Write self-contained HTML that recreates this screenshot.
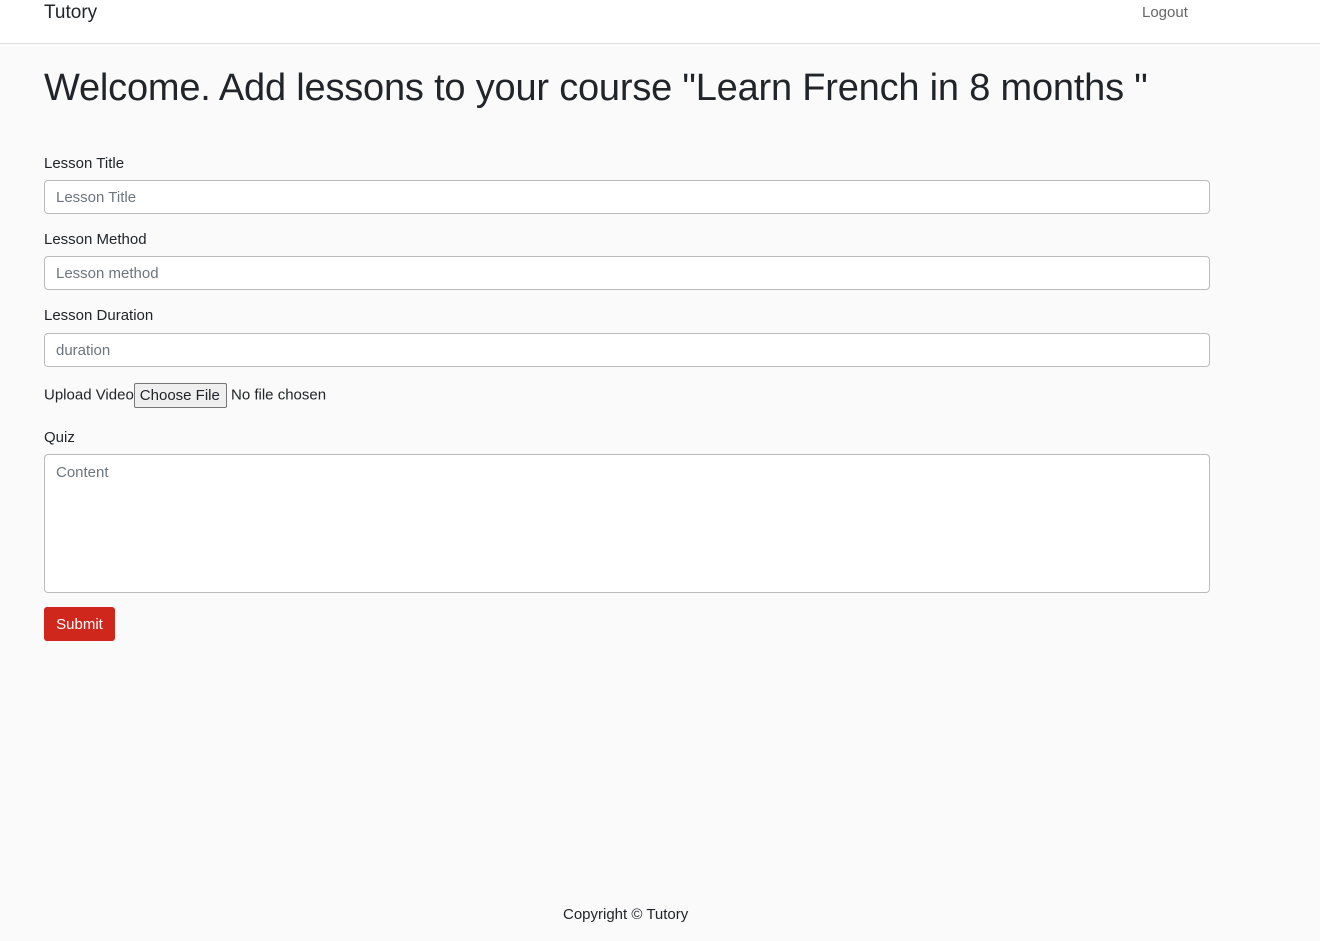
<!DOCTYPE html>
<html><head><meta charset="utf-8"><style>
*{box-sizing:border-box;margin:0;padding:0}
body{width:1320px;height:941px;background:#fafafa;font-family:"Liberation Sans",sans-serif;color:#212529;position:relative;overflow:hidden}
.nav{position:absolute;left:0;top:0;width:1320px;height:44px;background:#fff;border-bottom:1px solid #ddd}
.brand{position:absolute;left:44px;top:1px;font-size:19px;line-height:24px}
.logout{position:absolute;left:1142px;top:4px;font-size:15px;color:#666}
h1{position:absolute;left:44px;top:65px;font-size:38px;font-weight:normal;line-height:46px;white-space:nowrap;letter-spacing:-0.2px}
.lbl{position:absolute;left:44px;font-size:15px;line-height:20px}
.in{position:absolute;left:44px;width:1166px;height:34px;background:#fff;border:1px solid #bbb;border-radius:4px;font-size:15px;color:#6c757d;padding:8px 11px;line-height:18px}
.btn{position:absolute;left:44px;top:607px;width:71px;height:34px;background:#d0271d;border-radius:3px;color:#fff;font-size:15px;line-height:36px;text-align:center}
.cf{display:inline-block;background:#efefef;border:1px solid #767676;border-radius:2px;padding:0 6px 0 5px;height:25px;line-height:23px;vertical-align:middle}
</style></head><body>
<div class="nav"><div class="brand">Tutory</div><div class="logout">Logout</div></div>
<h1>Welcome. Add lessons to your course "Learn French in 8 months "</h1>
<div class="lbl" style="top:154px">Lesson Title</div>
<div class="in" style="top:180px">Lesson Title</div>
<div class="lbl" style="top:230px">Lesson Method</div>
<div class="in" style="top:256px">Lesson method</div>
<div class="lbl" style="top:306px">Lesson Duration</div>
<div class="in" style="top:333px">duration</div>
<div class="lbl" style="top:383px">Upload Video<span class="cf">Choose File</span> No file chosen</div>
<div class="lbl" style="top:428px">Quiz</div>
<div class="in" style="top:454px;height:139px;padding-top:9px">Content</div>
<div class="btn">Submit</div>
<div class="lbl" style="top:905px;left:563px">Copyright © Tutory</div>
</body></html>
